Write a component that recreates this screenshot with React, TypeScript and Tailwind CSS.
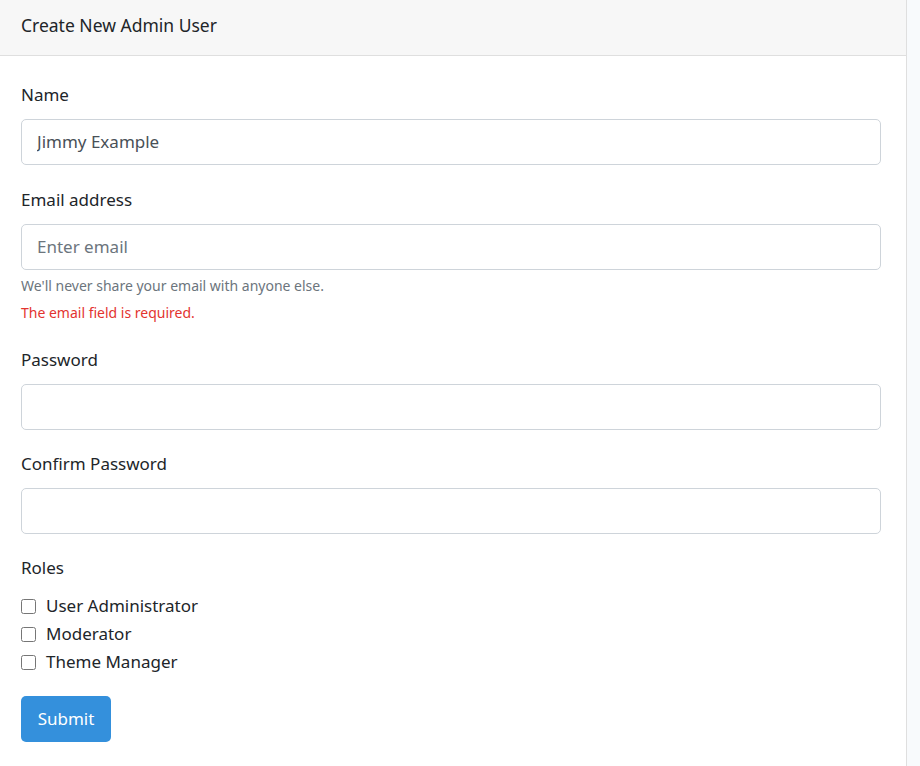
export default function App() {
  return (
    <div className="flex min-h-screen bg-[#f8fafc] font-['Noto_Sans','Lato',sans-serif] text-[#212529]">
      <div className="w-[907px] bg-white border-r border-[#dfdfdf]">
        {/* Header */}
        <div className="h-[56px] bg-[#f7f7f7] border-b border-[#dfdfdf] px-[21px] flex items-center pb-[5px] text-[17.5px]">
          Create New Admin User
        </div>

        {/* Body */}
        <div className="pt-[24px] pl-[21px] pr-[25px] pb-[24px]">
          <div className="mb-[20px]">
            <label className="block text-[17px] leading-[29px] mb-[10px]">Name</label>
            <input
              type="text"
              defaultValue="Jimmy Example"
              className="w-full h-[46px] border border-[#ced4da] rounded-[5px] px-[15px] pb-[2px] text-[17px] text-[#495057] outline-none"
            />
          </div>

          <div className="mb-[21px]">
            <label className="block text-[17px] leading-[29px] mb-[10px]">Email address</label>
            <input
              type="email"
              placeholder="Enter email"
              className="w-full h-[46px] border border-[#ced4da] rounded-[5px] px-[15px] pb-[2px] text-[17px] text-[#495057] placeholder:text-[#6c757d] outline-none"
            />
            <small className="block mt-[5px] text-[14px] leading-[22px] text-[#6c757d]">
              We'll never share your email with anyone else.
            </small>
            <div className="mt-[5px] text-[14px] leading-[22px] text-[#e3342f]">
              The email field is required.
            </div>
          </div>

          <div className="mb-[19px]">
            <label className="block text-[17px] leading-[29px] mb-[10px]">Password</label>
            <input
              type="password"
              className="w-full h-[46px] border border-[#ced4da] rounded-[5px] px-[15px] text-[17px] outline-none"
            />
          </div>

          <div className="mb-[19px]">
            <label className="block text-[17px] leading-[29px] mb-[10px]">Confirm Password</label>
            <input
              type="password"
              className="w-full h-[46px] border border-[#ced4da] rounded-[5px] px-[15px] text-[17px] outline-none"
            />
          </div>

          <div className="mb-[20px]">
            <label className="block text-[17px] leading-[29px] mb-[10px]">Roles</label>
            {["User Administrator", "Moderator", "Theme Manager"].map((role) => (
              <label key={role} className="flex items-center gap-[10px] h-[28px] text-[17px]">
                <input type="checkbox" className="w-[15px] h-[15px] m-0" />
                {role}
              </label>
            ))}
          </div>

          <button className="h-[46px] w-[90px] rounded-[5px] bg-[#3490dc] text-white text-[17px]">
            Submit
          </button>
        </div>
      </div>
    </div>
  );
}
